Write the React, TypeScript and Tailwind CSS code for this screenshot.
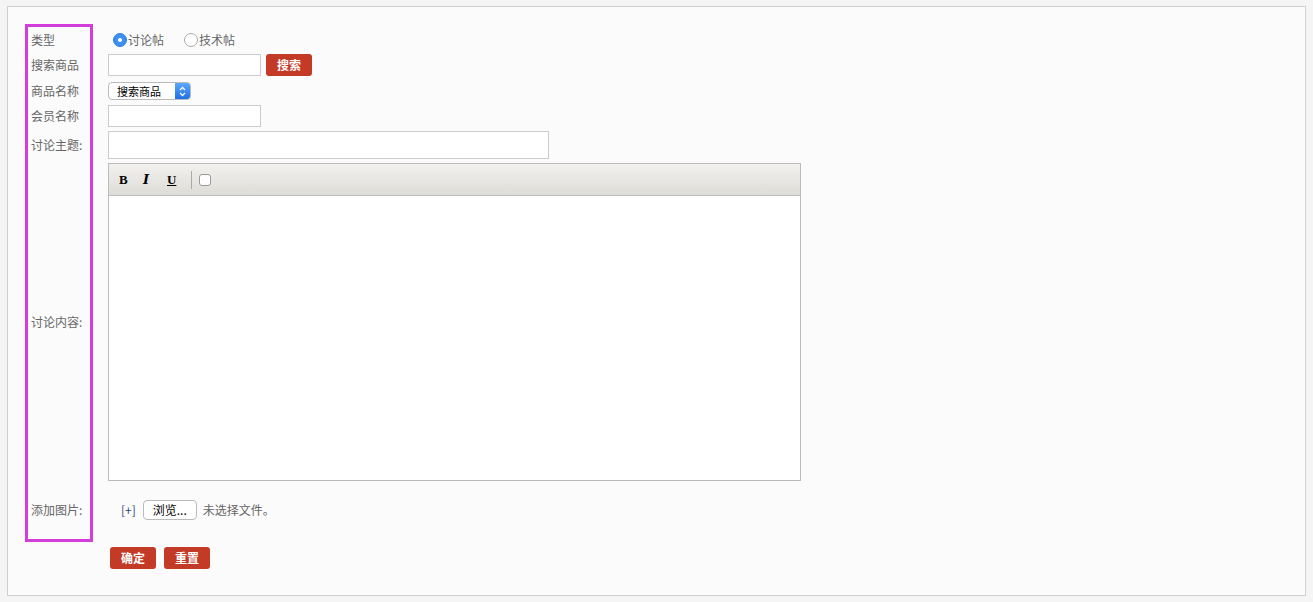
import { ReactNode } from "react";

const font = { fontFamily: '"Noto Sans CJK SC", "Liberation Sans", sans-serif' };

function Row({ label, h, children }: { label: string; h: string; children?: ReactNode }) {
  return (
    <div className={`flex items-center ${h}`}>
      <div className="w-[77px] shrink-0 text-[12px] text-[#666]">{label}</div>
      <div className="flex items-center gap-[5px]">{children}</div>
    </div>
  );
}

function Radio({ checked, label }: { checked?: boolean; label: string }) {
  return (
    <label className="flex items-center gap-[1px] text-[12px] text-[#666]">
      {checked ? (
        <span className="flex h-[14px] w-[14px] items-center justify-center rounded-full bg-[#3d8ff2] border border-[#2f7de0]">
          <span className="h-[4px] w-[4px] rounded-full bg-white" />
        </span>
      ) : (
        <span className="h-[14px] w-[14px] rounded-full border border-[#aaa] bg-white" />
      )}
      {label}
    </label>
  );
}

function RedButton({ children }: { children: ReactNode }) {
  return (
    <button className="h-[22px] w-[46px] rounded-[3px] bg-[#c33a27] text-[12px] font-bold text-white">
      {children}
    </button>
  );
}

export default function App() {
  return (
    <div className="min-h-[602px] bg-[#f5f5f5] px-[7px] pt-[6px] pb-[6px]" style={font}>
      <div className="relative h-[590px] border border-[#cfcfcf] bg-[#fbfbfb] pl-[23px] pt-[21px]">
        {/* highlight box round the labels */}
        <div className="pointer-events-none absolute left-[17px] top-[17px] h-[518px] w-[68px] border-[3px] border-[#d43ddb]" />

        <Row label="类型" h="h-[24px]">
          <div className="flex items-center gap-[20px] pl-[5px]">
            <Radio checked label="讨论帖" />
            <Radio label="技术帖" />
          </div>
        </Row>

        <Row label="搜索商品" h="h-[26px]">
          <input className="h-[22px] w-[153px] border border-[#ccc] bg-white outline-none" />
          <RedButton>搜索</RedButton>
        </Row>

        <Row label="商品名称" h="h-[26px]">
          <div className="flex h-[18px] w-[83px] items-center overflow-hidden rounded-[4px] border border-[#bbb] bg-white">
            <span className="flex-1 pl-[8px] text-[11px] text-black">搜索商品</span>
            <span className="flex h-full w-[15px] items-center justify-center bg-gradient-to-b from-[#5aa7fb] to-[#1f6fe6]">
              <svg width="7" height="11" viewBox="0 0 7 11" fill="none" stroke="white" strokeWidth="1.3">
                <path d="M1 4 L3.5 1.5 L6 4" />
                <path d="M1 7 L3.5 9.5 L6 7" />
              </svg>
            </span>
          </div>
        </Row>

        <Row label="会员名称" h="h-[24px]">
          <input className="h-[22px] w-[153px] border border-[#ccc] bg-white outline-none" />
        </Row>

        <Row label="讨论主题:" h="h-[33px]">
          <input className="h-[28px] w-[441px] border border-[#ccc] bg-white outline-none" />
        </Row>

        <Row label="讨论内容:" h="h-[322px]">
          <div className="flex h-[318px] w-[693px] flex-col border border-[#bbb] bg-white">
            <div className="flex h-[32px] items-center border-b border-[#bbb] bg-gradient-to-b from-[#f2f1ee] to-[#dedcd7] pl-[10px]">
              <span className="w-[24px] text-[13px] font-bold text-black" style={{ fontFamily: '"Liberation Serif", serif' }}>B</span>
              <span className="w-[24px] text-[13px] font-black italic text-black" style={{ fontFamily: '"DejaVu Serif", serif' }}>I</span>
              <span className="w-[24px] text-[13px] font-bold text-black underline" style={{ fontFamily: '"Liberation Serif", serif' }}>U</span>
              <span className="mr-[7px] h-[18px] w-px bg-[#aaa]" />
              <span className="h-[12px] w-[12px] rounded-[3px] border border-[#999] bg-white" />
            </div>
            <div className="flex-1" />
          </div>
        </Row>

        <Row label="添加图片:" h="h-[54px]">
          <div className="flex items-center pl-[13px] text-[12px]">
            <span className="mr-[7px] text-[#2c4a78]">[+]</span>
            <button className="h-[20px] w-[54px] rounded-[4px] border border-[#bbb] bg-white text-[12px] text-black">
              浏览...
            </button>
            <span className="ml-[6px] text-[#666]">未选择文件。</span>
          </div>
        </Row>

        <div className="mt-[10px] flex gap-[8px] pl-[79px]">
          <RedButton>确定</RedButton>
          <RedButton>重置</RedButton>
        </div>
      </div>
    </div>
  );
}
